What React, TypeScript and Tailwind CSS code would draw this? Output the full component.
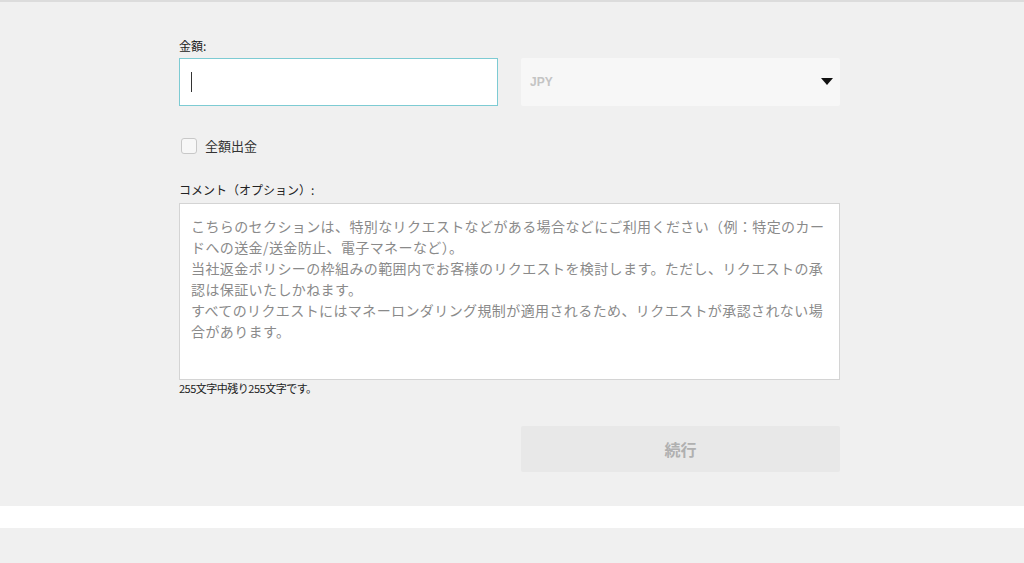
const font = { fontFamily: '"Noto Sans CJK JP", "Noto Sans", sans-serif' };

export default function App() {
    return (
        <div className="w-[1024px] h-[563px] bg-[#f0f0f0] flex flex-col overflow-hidden" style={font}>
            <div className="h-[2px] bg-[#dcdcdc]"></div>
            <div className="h-[504px] ml-[179px] w-[661px] flex flex-col">
                <label className="mt-[36px] text-[12px] leading-[16px] text-[#222]">金額:</label>
                <div className="mt-[4px] flex gap-[23px]">
                    <div className="w-[319px] h-[48px] bg-white border border-[#7dcbd3] flex items-center pl-[11px]">
                        <div className="w-px h-[20px] bg-[#333]"></div>
                    </div>
                    <div className="w-[319px] h-[48px] bg-[#f7f7f7] rounded-[2px] flex items-center justify-between pl-[9px] pr-[7px]">
                        <span className="text-[12px] font-bold text-[#c4c4c4]" style={{ fontFamily: '"Liberation Sans", sans-serif' }}>JPY</span>
                        <svg width="12" height="8" viewBox="0 0 12 8"><path d="M0 0h12L6 7z" fill="#111" /></svg>
                    </div>
                </div>
                <div className="mt-[30px] flex items-center gap-[8px] pl-[2px]">
                    <div className="w-[16px] h-[16px] border border-[#c8c8c8] rounded-[3px] bg-[#f7f7f7]"></div>
                    <span className="text-[13px] text-[#333]">全額出金</span>
                </div>
                <label className="mt-[26px] text-[12px] leading-[16px] text-[#222]">コメント（オプション）:</label>
                <div className="mt-[5px] h-[177px] bg-white border border-[#d4d4d4] px-[11px] pt-[12px] text-[14px] leading-[21px] tracking-[0.4px] text-[#8a8a8a]">
                    こちらのセクションは、特別なリクエストなどがある場合などにご利用ください（例：特定のカードへの送金/送金防止、電子マネーなど）。<br />
                    当社返金ポリシーの枠組みの範囲内でお客様のリクエストを検討します。ただし、リクエストの承認は保証いたしかねます。<br />
                    すべてのリクエストにはマネーロンダリング規制が適用されるため、リクエストが承認されない場合があります。
                </div>
                <p className="mt-[0px] text-[11px] leading-[16px] text-[#222] tracking-[-0.5px]">255文字中残り255文字です。</p>
                <div className="mt-[30px] flex justify-end">
                    <button className="w-[319px] h-[46px] bg-[#e8e8e8] rounded-[2px] text-[16px] font-bold text-[#b0b0b0]">続行</button>
                </div>
            </div>
            <div className="h-[22px] bg-white"></div>
        </div>
    );
}
